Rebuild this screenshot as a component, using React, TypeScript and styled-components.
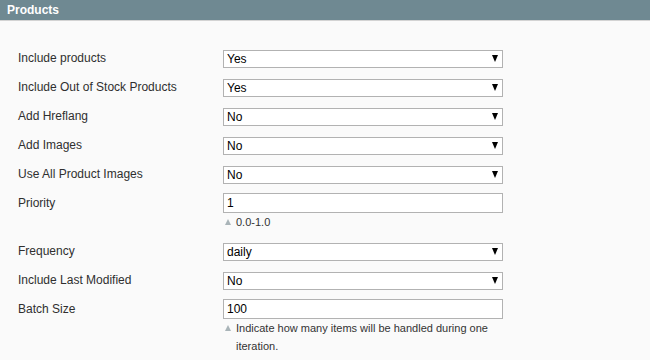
import React from 'react';
import styled, { createGlobalStyle } from 'styled-components';

const GlobalStyle = createGlobalStyle`
  html, body {
    margin: 0;
    padding: 0;
    background: #fafafa;
    font-family: "Liberation Sans", Arial, sans-serif;
  }
`;

const Section = styled.div`
  width: 650px;
  height: 360px;
  overflow: hidden;
  background: #fafafa;
`;

const Header = styled.div`
  height: 20px;
  background: #6f8992;
  border-bottom: 1px solid #d3d3d3;
  display: flex;
  align-items: center;
  padding-left: 7px;
  color: #fff;
  font-weight: bold;
  font-size: 12px;
`;

const Body = styled.div`
  padding-top: 23px;
`;

const Row = styled.div<{ $text?: boolean }>`
  display: flex;
  align-items: flex-start;
  padding: ${p => (p.$text ? '4px 0 6px' : '5px 0 6px')};
`;

const Label = styled.label<{ $text?: boolean }>`
  width: 223px;
  flex: none;
  padding-left: 18px;
  box-sizing: border-box;
  font-size: 12px;
  color: #2f2f2f;
  line-height: ${p => (p.$text ? '20px' : '18px')};
`;

const Value = styled.div`
  width: 280px;
`;

const SelectWrap = styled.div`
  position: relative;
  height: 18px;
`;

const Select = styled.select`
  appearance: none;
  -webkit-appearance: none;
  width: 280px;
  height: 18px;
  box-sizing: border-box;
  margin: 0;
  padding: 0 0 0 3px;
  border: 1px solid #b2b2b2;
  border-radius: 0;
  background: #fff;
  font-family: "Liberation Sans", Arial, sans-serif;
  font-size: 12px;
  color: #000;
  outline: none;
`;

const Arrow = styled.span`
  position: absolute;
  right: 5px;
  top: 6px;
  width: 0;
  height: 0;
  border-left: 3.5px solid transparent;
  border-right: 3.5px solid transparent;
  border-top: 7px solid #000;
  pointer-events: none;
`;

const Input = styled.input`
  display: block;
  width: 280px;
  height: 20px;
  box-sizing: border-box;
  margin: 0;
  padding: 0 0 0 3px;
  border: 1px solid #b2b2b2;
  background: #fff;
  font-family: "Liberation Sans", Arial, sans-serif;
  font-size: 12px;
  color: #000;
  outline: none;
`;

const Hint = styled.div`
  display: flex;
  gap: 5px;
  padding-left: 2px;
  font-size: 11px;
  line-height: 18px;
  color: #333;
`;

const HintMark = styled.span`
  flex: none;
  margin-top: 6px;
  width: 0;
  height: 0;
  border-left: 3.5px solid transparent;
  border-right: 3.5px solid transparent;
  border-bottom: 6px solid #a9b4b8;
`;

type Field =
  | { kind: 'select'; label: string; value: string; options: string[] }
  | { kind: 'text'; label: string; value: string; hint?: string };

const yesNo = ['Yes', 'No'];

const fields: Field[] = [
  { kind: 'select', label: 'Include products', value: 'Yes', options: yesNo },
  { kind: 'select', label: 'Include Out of Stock Products', value: 'Yes', options: yesNo },
  { kind: 'select', label: 'Add Hreflang', value: 'No', options: yesNo },
  { kind: 'select', label: 'Add Images', value: 'No', options: yesNo },
  { kind: 'select', label: 'Use All Product Images', value: 'No', options: yesNo },
  { kind: 'text', label: 'Priority', value: '1', hint: '0.0-1.0' },
  {
    kind: 'select',
    label: 'Frequency',
    value: 'daily',
    options: ['always', 'hourly', 'daily', 'weekly', 'monthly', 'yearly', 'never'],
  },
  { kind: 'select', label: 'Include Last Modified', value: 'No', options: yesNo },
  {
    kind: 'text',
    label: 'Batch Size',
    value: '100',
    hint: 'Indicate how many items will be handled during one iteration.',
  },
];

export default function App() {
  return (
    <>
      <GlobalStyle />
      <Section>
        <Header>Products</Header>
        <Body>
          {fields.map(f => (
            <Row key={f.label} $text={f.kind === 'text'}>
              <Label $text={f.kind === 'text'}>{f.label}</Label>
              <Value>
                {f.kind === 'select' ? (
                  <SelectWrap>
                    <Select defaultValue={f.value}>
                      {f.options.map(o => (
                        <option key={o}>{o}</option>
                      ))}
                    </Select>
                    <Arrow />
                  </SelectWrap>
                ) : (
                  <>
                    <Input defaultValue={f.value} />
                    {f.hint && (
                      <Hint>
                        <HintMark />
                        <span>{f.hint}</span>
                      </Hint>
                    )}
                  </>
                )}
              </Value>
            </Row>
          ))}
        </Body>
      </Section>
    </>
  );
}
